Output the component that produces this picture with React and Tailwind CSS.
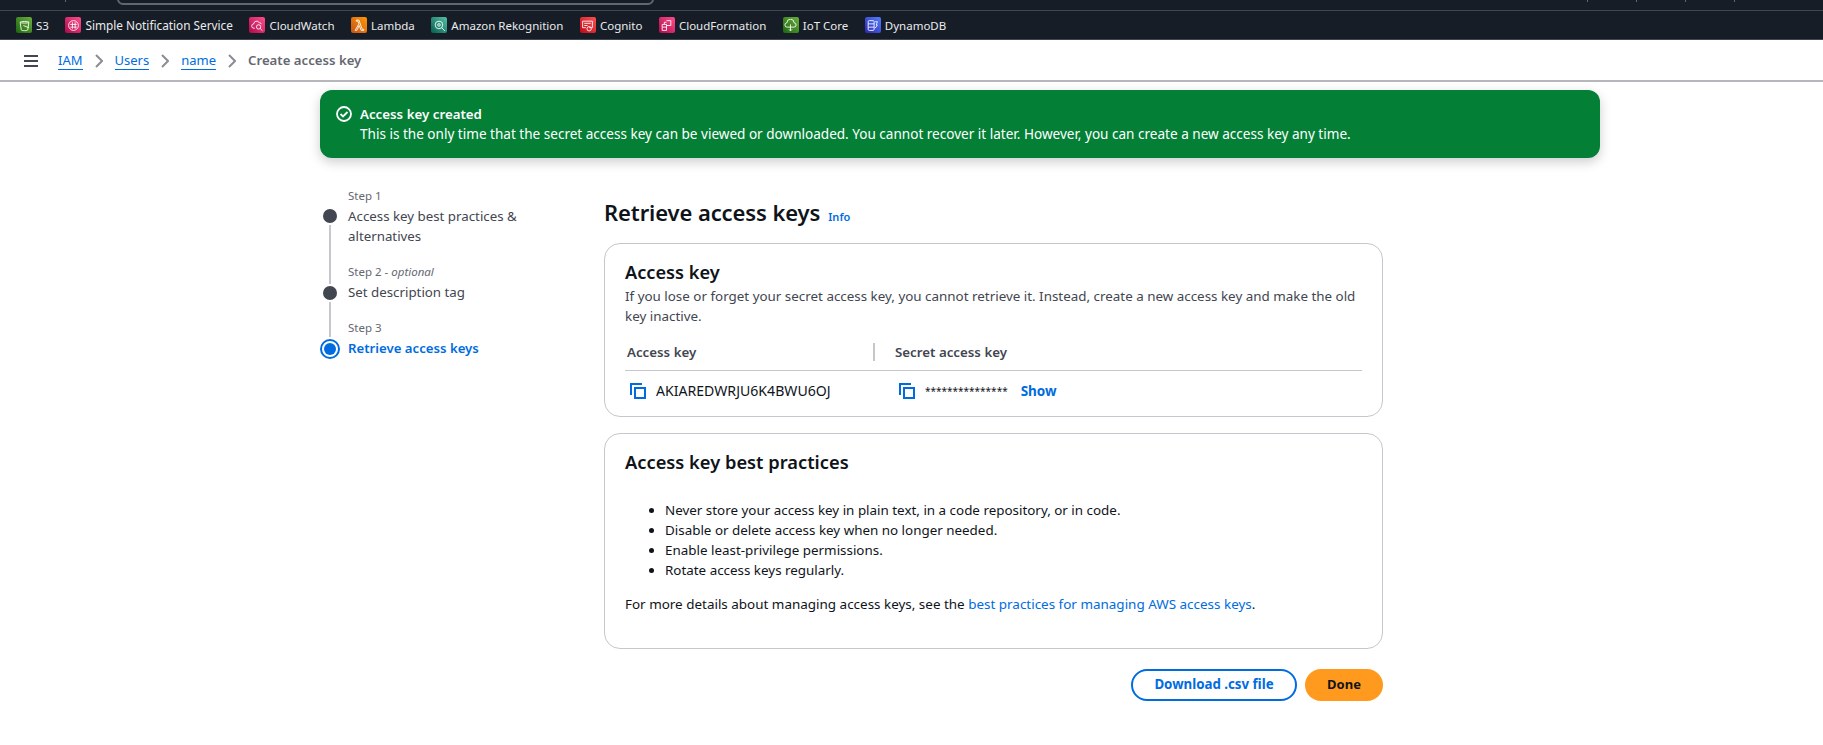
const F = { fontFamily: '"Noto Sans", sans-serif' };

function Svc({ name, c1, c2, wide, children }) {
  return (
    <div className="flex items-center gap-[4px]">
      <div className="w-[16px] h-[16px] rounded-[2px] flex items-center justify-center" style={{ background: `linear-gradient(to top right, ${c1}, ${c2})` }}>
        <svg viewBox="0 0 12 12" className="w-[13px] h-[13px]" fill="none" stroke="#fff" strokeWidth="0.8">{children}</svg>
      </div>
      <span className={wide ? "text-[11.8px] leading-[15px] text-[#e9ebed]" : "text-[11.5px] leading-[15px] text-[#e9ebed]"}>{name}</span>
    </div>
  );
}

function Copy() {
  return (
    <svg viewBox="0 0 16 16" className="w-[16px] h-[16px] shrink-0" fill="none" stroke="#006ce0" strokeWidth="2">
      <rect x="5" y="5" width="10" height="10" />
      <path d="M1 12V1h11" />
    </svg>
  );
}

function Chevron() {
  return (
    <svg viewBox="0 0 8 14" className="w-[8px] h-[14px]" fill="none" stroke="#8c8c94" strokeWidth="2">
      <path d="M1 1l6 6-6 6" />
    </svg>
  );
}

function Crumb({ children }) {
  return <a className="text-[#006ce0] border-b border-[#006ce0] leading-[17px] text-[13px]">{children}</a>;
}

function Dot() {
  return <div className="w-[14px] h-[14px] rounded-full bg-[#424650] shrink-0" />;
}

function Tick({ className }) {
  return <div className={`absolute top-0 w-px h-[2px] bg-[#5f6670] ${className}`} />;
}

export default function App() {
  return (
    <div style={F} className="w-[1823px] h-[745px] overflow-hidden bg-white text-[#0f141a]">
      <div className="h-[11px] bg-[#161d26] border-b border-[#414750] relative overflow-hidden">
        <div className="absolute left-[117px] top-[-12px] w-[537px] h-[17px] border-2 border-[#5f6670] rounded-[6px]" />
        <Tick className="left-[65px]" />
        <Tick className="left-[1587px]" />
        <Tick className="left-[1636px]" />
        <Tick className="left-[1685px]" />
        <Tick className="left-[1734px]" />
      </div>
      <div className="h-[29px] bg-[#161d26] pl-[16px] flex items-center gap-[16.5px] border-b border-[#414750]">
        <Svc name="S3" c1="#1b660f" c2="#6cae3e"><path d="M2 3c0-1 8-1 8 0l-1 7c0 1-6 1-6 0zM2 3c0 1 8 1 8 0M5 6l5 2" /></Svc>
        <Svc wide name="Simple Notification Service" c1="#b0084d" c2="#ff4f8b"><circle cx="6" cy="6" r="4.5" /><path d="M3 5h6M3 7.5h6M5 3v6M7.5 3v6" /></Svc>
        <Svc name="CloudWatch" c1="#b0084d" c2="#ff4f8b"><path d="M3.5 8.5H2.8a2 2 0 01-.3-4 2.7 2.7 0 015-1.2 2 2 0 012 1.5" /><circle cx="7" cy="7.3" r="2" /><path d="M8.5 8.8l2 2" /></Svc>
        <Svc name="Lambda" c1="#c8511b" c2="#ff9900"><path d="M2 10.5l3.5-6-1-2.5H3V1h2.5l3 8.5H10v1H7.5L5.8 6 3.5 10.5z" /></Svc>
        <Svc name="Amazon Rekognition" c1="#055f4e" c2="#56c0a7"><circle cx="5.5" cy="5.5" r="3.5" /><circle cx="5.5" cy="5.5" r="1.2" /><path d="M8 8l3 3" /></Svc>
        <Svc name="Cognito" c1="#bd0816" c2="#ff5252"><path d="M1.5 2h9v6h-3M1.5 2v6h3M3 4h6M3 6h3" /><circle cx="7.5" cy="9" r="2" /></Svc>
        <Svc name="CloudFormation" c1="#b0084d" c2="#ff4f8b"><path d="M2 5h4v5.5H2zM6 1.5h4V6H6M2 7.5h4M4 5V3h2" /></Svc>
        <Svc name="IoT Core" c1="#1b660f" c2="#6cae3e"><path d="M3 7.5a2 2 0 01-.3-4 3.3 3.3 0 016.6 0 2 2 0 01-.3 4zM6 5v6M4.5 9.5L6 11l1.5-1.5" /></Svc>
        <Svc name="DynamoDB" c1="#2e27ad" c2="#527fff"><rect x="2" y="1.5" width="5.5" height="9" rx="1" /><path d="M2 4.5h5.5M2 7.5h5.5M8.5 2.5h2l-1 3h1l-2 3" /></Svc>
      </div>

      <div className="h-[42px] bg-white border-b-2 border-[#b6b6bc] flex items-center pl-[24px] pt-[2px]">
        <svg viewBox="0 0 14 12" className="w-[14px] h-[12px] mr-[20px]" fill="#424650">
          <rect y="0" width="14" height="2" />
          <rect y="5" width="14" height="2" />
          <rect y="10" width="14" height="2" />
        </svg>
        <div className="flex items-center gap-[12px]">
          <Crumb>IAM</Crumb>
          <Chevron />
          <Crumb>Users</Crumb>
          <Chevron />
          <Crumb>name</Crumb>
          <Chevron />
          <span className="font-semibold text-[#656871] text-[13.2px]">Create access key</span>
        </div>
      </div>

      <div className="ml-[320px] w-[1280px] mt-[8px] h-[68px] bg-[#037f36] rounded-[12px] text-white flex pl-[16px] pt-[14px] shadow-[0_4px_12px_rgba(0,7,22,0.2)]">
        <svg viewBox="0 0 16 16" className="w-[16px] h-[16px] mt-[2px] mr-[8px] shrink-0" fill="none" stroke="#fff" strokeWidth="1.8">
          <circle cx="8" cy="8" r="7" />
          <path d="M4.5 8l2.5 2.5 4.5-4.5" />
        </svg>
        <div className="leading-[20px]">
          <div className="font-semibold text-[13.3px]">Access key created</div>
          <div className="text-[13.55px]">This is the only time that the secret access key can be viewed or downloaded. You cannot recover it later. However, you can create a new access key any time.</div>
        </div>
      </div>

      <div className="ml-[320px] mt-[30px] flex">
        <div className="w-[284px] shrink-0">
          <div className="flex gap-[8px]">
            <div className="w-[20px] flex flex-col items-center pt-[21px]">
              <Dot />
              <div className="w-[2px] flex-1 bg-[#c6c6cd] mt-[2px]" />
            </div>
            <div className="pb-[18px]">
              <div className="text-[11.5px] leading-[16px] text-[#656871]">Step 1</div>
              <div className="text-[#424650] text-[13.3px] leading-[20px] mt-[2px] w-[180px]">Access key best practices &amp; alternatives</div>
            </div>
          </div>
          <div className="flex gap-[8px]">
            <div className="w-[20px] flex flex-col items-center">
              <div className="w-[2px] h-[20px] bg-[#c6c6cd] mb-[2px]" />
              <Dot />
              <div className="w-[2px] flex-1 bg-[#c6c6cd] mt-[2px]" />
            </div>
            <div className="pb-[18px]">
              <div className="text-[11.5px] leading-[16px] text-[#656871]">Step 2 - <i>optional</i></div>
              <div className="text-[#424650] text-[13.3px] leading-[20px] mt-[2px]">Set description tag</div>
            </div>
          </div>
          <div className="flex gap-[8px]">
            <div className="w-[20px] flex flex-col items-center">
              <div className="w-[2px] h-[17px] bg-[#c6c6cd] mb-[2px]" />
              <div className="w-[20px] h-[20px] rounded-full border-2 border-[#006ce0] flex items-center justify-center">
                <div className="w-[12px] h-[12px] rounded-full bg-[#006ce0]" />
              </div>
            </div>
            <div>
              <div className="text-[11.5px] leading-[16px] text-[#656871]">Step 3</div>
              <div className="text-[#006ce0] font-semibold text-[13.2px] leading-[20px] mt-[2px]">Retrieve access keys</div>
            </div>
          </div>
        </div>

        <div className="w-[779px]">
          <div className="flex items-baseline gap-[8px] mt-[10px]">
            <h1 className="text-[22px] leading-[28px] font-semibold tracking-[-0.1px]">Retrieve access keys</h1>
            <a className="text-[11px] font-semibold text-[#006ce0]">Info</a>
          </div>

          <div className="mt-[17px] h-[174px] border border-[#c6c6cd] rounded-[16px] px-[20px] pt-[16px]">
            <h2 className="text-[18.2px] leading-[24px] font-semibold">Access key</h2>
            <p className="text-[13.4px] leading-[20px] text-[#424650] mt-[2px]">If you lose or forget your secret access key, you cannot retrieve it. Instead, create a new access key and make the old key inactive.</p>
            <div className="mt-[17px] pb-[9px] flex items-center border-b border-[#c6c6cd] text-[13.3px] font-semibold text-[#424650]">
              <div className="w-[250px] pl-[2px] border-r-2 border-[#c6c6cd] h-[18px] leading-[18px]">Access key</div>
              <div className="pl-[20px] leading-[18px]">Secret access key</div>
            </div>
            <div className="flex items-center h-[40px]">
              <div className="w-[274px] pl-[5px] flex items-center gap-[10px]">
                <Copy />
                <span className="text-[14.1px] text-[#0f141a]">AKIAREDWRJU6K4BWU6OJ</span>
              </div>
              <Copy />
              <span className="ml-[10px] text-[10px] text-[#0f141a]">***************</span>
              <a className="ml-[13px] text-[13.5px] font-bold text-[#006ce0]">Show</a>
            </div>
          </div>

          <div className="mt-[16px] h-[216px] border border-[#c6c6cd] rounded-[16px] px-[20px] pt-[16px]">
            <h2 className="text-[18.3px] leading-[24px] font-semibold">Access key best practices</h2>
            <ul className="list-disc mt-[26px] pl-[40px] text-[13.4px] leading-[20px]">
              <li>Never store your access key in plain text, in a code repository, or in code.</li>
              <li>Disable or delete access key when no longer needed.</li>
              <li>Enable least-privilege permissions.</li>
              <li>Rotate access keys regularly.</li>
            </ul>
            <p className="text-[13.45px] leading-[20px] mt-[14px]">
              For more details about managing access keys, see the <a className="text-[#006ce0]">best practices for managing AWS access keys</a>.
            </p>
          </div>

          <div className="flex justify-end gap-[8px] mt-[20px]">
            <button className="h-[32px] w-[166px] border-2 border-[#006ce0] rounded-full text-[#006ce0] text-[13.3px] font-bold">Download .csv file</button>
            <button className="h-[32px] w-[78px] bg-[#ff9a1e] rounded-full text-[#0f141a] text-[13px] font-bold">Done</button>
          </div>
        </div>
      </div>
    </div>
  );
}
